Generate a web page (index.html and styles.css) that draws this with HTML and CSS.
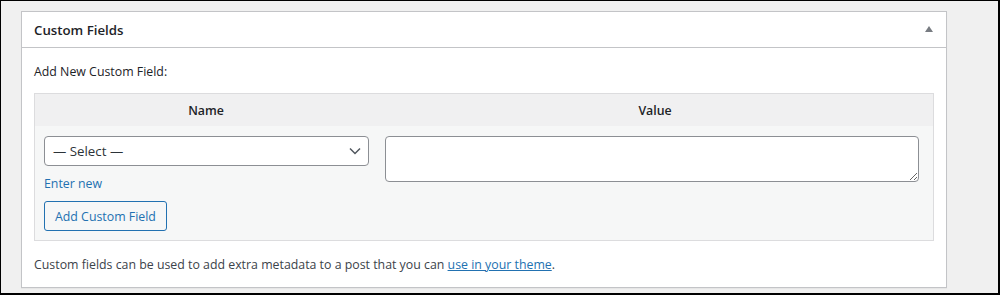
FILE: index.html
```html
<!DOCTYPE html>
<html lang="en">
  <head>
    <meta charset="UTF-8" />
    <meta name="viewport" content="width=device-width, initial-scale=1.0" />
    <title>Custom Fields</title>
    <link rel="stylesheet" href="styles.css">
  </head>
  <body>
    <div class="frame">
      <!--==================== CUSTOM FIELDS BOX ====================-->
      <div class="postbox">
        <div class="postbox__header">
          <h2 class="postbox__title">Custom Fields</h2>
          <span class="postbox__toggle"></span>
        </div>

        <div class="postbox__inside">
          <p class="newmeta__label">Add New Custom Field:</p>

          <div class="newmeta">
            <div class="newmeta__head">
              <div class="newmeta__th newmeta__th--name">Name</div>
              <div class="newmeta__th">Value</div>
            </div>

            <div class="newmeta__row">
              <div class="newmeta__cell newmeta__cell--name">
                <div class="select">
                  <span>— Select —</span>
                  <svg width="12" height="8" viewBox="0 0 12 8">
                    <path d="M1 1.5l5 5 5-5" fill="none" stroke="#50575e" stroke-width="1.5" />
                  </svg>
                </div>
                <a href="#" class="newmeta__enter">Enter new</a>
              </div>

              <div class="newmeta__cell">
                <textarea class="newmeta__value"></textarea>
              </div>
            </div>

            <div class="newmeta__submit">
              <button type="button" class="button">Add Custom Field</button>
            </div>
          </div>

          <p class="postbox__note">
            Custom fields can be used to add extra metadata to a post that you can
            <a href="#">use in your theme</a>.
          </p>
        </div>
      </div>
    </div>
  </body>
</html>
```

FILE: styles.css
```css
body {
  margin: 0;
  padding: 0;
  font-family: "Open Sans", "Noto Sans", sans-serif;
  font-size: 12.35px;
  color: #3c434a;
}
.frame {
  box-sizing: border-box;
  width: 1000px;
  height: 295px;
  background-color: #f0f0f0;
  border-style: solid;
  border-color: #000;
  border-width: 1px 2px 2px 1px;
  padding: 10px 0 0 20px;
}
.postbox {
  box-sizing: border-box;
  width: 926px;
  height: 277px;
  background-color: #fff;
  border: 1px solid #c3c4c7;
  box-shadow: 0 1px 1px rgba(0, 0, 0, 0.04);
}
.postbox__header {
  display: flex;
  align-items: center;
  justify-content: space-between;
  height: 35px;
  padding: 0 13px 0 12px;
  border-bottom: 1px solid #c3c4c7;
}
.postbox__title {
  margin: 0;
  padding-top: 1px;
  font-size: 13.25px;
  font-weight: 600;
  color: #1d2327;
}
.postbox__toggle {
  width: 0;
  height: 0;
  border-left: 4.5px solid transparent;
  border-right: 4.5px solid transparent;
  border-bottom: 6px solid #787c82;
  margin-top: -2px;
}
.postbox__inside {
  padding: 0 12px;
}
.newmeta__label {
  margin: 0;
  padding: 15px 0 12px;
  line-height: 18px;
  color: #1d2327;
}
.newmeta {
  border: 1px solid #dcdcde;
  background-color: #f6f7f7;
}
.newmeta__head {
  display: grid;
  grid-template-columns: 342px 1fr;
  background-color: #f0f0f1;
  height: 32px;
  align-items: center;
}
.newmeta__th {
  text-align: center;
  font-weight: 600;
  color: #1d2327;
}
.newmeta__row {
  display: grid;
  grid-template-columns: 342px 1fr;
}
.newmeta__cell {
  padding: 10px 14px 0 8px;
}
.newmeta__cell--name {
  padding: 10px 8px 0 9px;
}
.select {
  box-sizing: border-box;
  display: flex;
  align-items: center;
  justify-content: space-between;
  height: 30px;
  padding: 0 7px 0 8px;
  background-color: #fff;
  border: 1px solid #8c8f94;
  border-radius: 4px;
  font-size: 13.3px;
  color: #2c3338;
}
.newmeta__enter {
  display: inline-block;
  margin-top: 9px;
  color: #2271b1;
  text-decoration: none;
}
.newmeta__value {
  box-sizing: border-box;
  display: block;
  width: 100%;
  height: 46px;
  border: 1px solid #8c8f94;
  border-radius: 4px;
  background-color: #fff;
  margin: 0;
}
.newmeta__submit {
  padding: 9px 9px 9px;
}
.button {
  box-sizing: border-box;
  height: 30px;
  padding: 0 10px;
  font-family: inherit;
  font-size: 12.35px;
  color: #2271b1;
  background-color: #f6f7f7;
  border: 1px solid #2271b1;
  border-radius: 3px;
  cursor: pointer;
}
.postbox__note {
  margin: 0;
  padding: 15px 0 0;
  line-height: 18px;
}
.postbox__note a {
  color: #2271b1;
}
```
